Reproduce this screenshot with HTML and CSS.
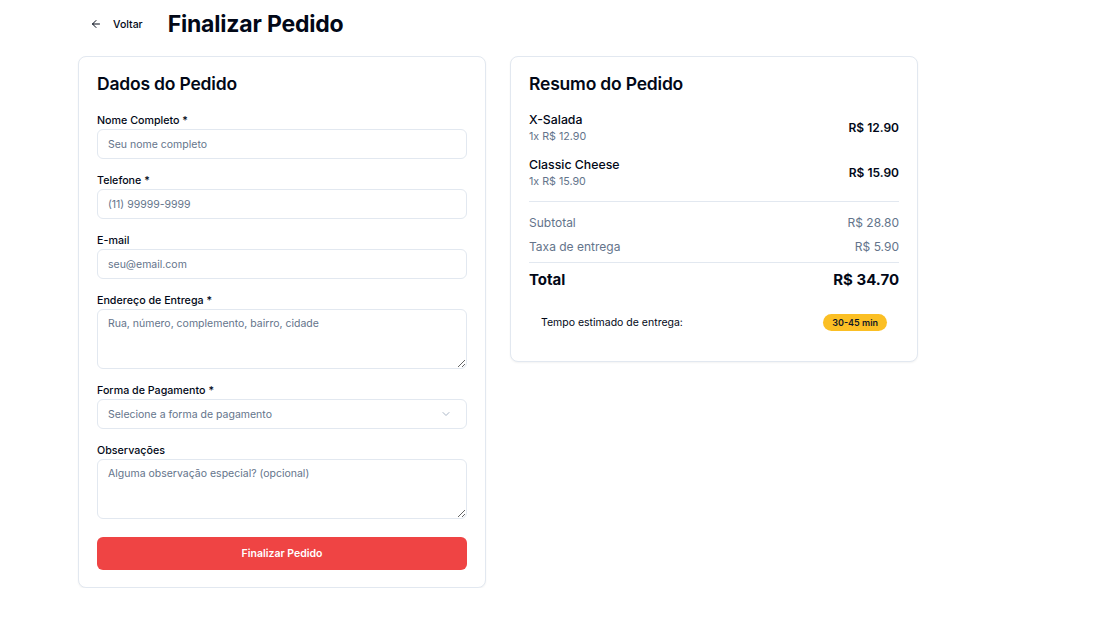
FILE: index.html
```html
<!DOCTYPE html>
<html lang="pt-BR">
<head>
<meta charset="utf-8">
<title>Finalizar Pedido</title>
<link rel="stylesheet" href="styles.css">
</head>
<body>
<div class="page">
  <header class="header">
    <button class="back" type="button">
      <svg width="12" height="12" viewBox="0 0 24 24" fill="none" stroke="currentColor" stroke-width="2" stroke-linecap="round" stroke-linejoin="round"><path d="m12 19-7-7 7-7"/><path d="M19 12H5"/></svg>
      <span>Voltar</span>
    </button>
    <h1 class="title">Finalizar Pedido</h1>
  </header>
  <main class="grid">
    <section class="card">
      <h2 class="card-title">Dados do Pedido</h2>
      <form class="form">
        <div class="field">
          <label class="label">Nome Completo *</label>
          <input class="input" type="text" placeholder="Seu nome completo">
        </div>
        <div class="field">
          <label class="label">Telefone *</label>
          <input class="input" type="text" placeholder="(11) 99999-9999">
        </div>
        <div class="field">
          <label class="label">E-mail</label>
          <input class="input" type="email" placeholder="seu@email.com">
        </div>
        <div class="field">
          <label class="label">Endereço de Entrega *</label>
          <textarea class="input textarea" placeholder="Rua, número, complemento, bairro, cidade"></textarea>
        </div>
        <div class="field">
          <label class="label">Forma de Pagamento *</label>
          <div class="input select">
            <span>Selecione a forma de pagamento</span>
            <svg width="12" height="12" viewBox="0 0 24 24" fill="none" stroke="currentColor" stroke-width="2" stroke-linecap="round" stroke-linejoin="round"><path d="m6 9 6 6 6-6"/></svg>
          </div>
        </div>
        <div class="field">
          <label class="label">Observações</label>
          <textarea class="input textarea" placeholder="Alguma observação especial? (opcional)"></textarea>
        </div>
        <button class="submit" type="button">Finalizar Pedido</button>
      </form>
    </section>
    <section class="card summary">
      <h2 class="card-title">Resumo do Pedido</h2>
      <div class="items">
        <div class="item">
          <div>
            <div class="item-name">X-Salada</div>
            <div class="item-sub">1x R$ 12.90</div>
          </div>
          <div class="item-price">R$ 12.90</div>
        </div>
        <div class="item">
          <div>
            <div class="item-name">Classic Cheese</div>
            <div class="item-sub">1x R$ 15.90</div>
          </div>
          <div class="item-price">R$ 15.90</div>
        </div>
      </div>
      <div class="totals">
        <div class="row muted"><span>Subtotal</span><span>R$ 28.80</span></div>
        <div class="row muted"><span>Taxa de entrega</span><span>R$ 5.90</span></div>
      </div>
      <div class="row total"><span>Total</span><span>R$ 34.70</span></div>
      <div class="eta">
        <span>Tempo estimado de entrega:</span>
        <span class="badge">30-45 min</span>
      </div>
    </section>
  </main>
</div>
</body>
</html>
```
FILE: styles.css
```css
* { box-sizing: border-box; }
html, body { margin: 0; padding: 0; background: #ffffff; }
body {
  font-family: Inter, "Noto Sans", sans-serif;
  color: #020817;
}
.page {
  padding: 8px 0 0 78px;
}
.header {
  display: flex;
  align-items: center;
  height: 32px;
  margin-bottom: 16px;
}
.back {
  display: flex;
  align-items: center;
  gap: 11px;
  background: none;
  border: 0;
  padding: 0 0 0 12px;
  margin-right: 25px;
  font-family: inherit;
  font-size: 10.5px;
  font-weight: 500;
  color: #020817;
  cursor: pointer;
}
.title {
  margin: 0;
  font-size: 23px;
  font-weight: 700;
  line-height: 32px;
  letter-spacing: -0.2px;
}
.grid {
  display: grid;
  grid-template-columns: 408px 408px;
  gap: 24px;
  align-items: start;
}
.card {
  border: 1px solid #e2e8f0;
  border-radius: 8px;
  padding: 15px 18px 17px;
  box-shadow: 0 1px 2px rgba(0,0,0,0.05);
  background: #fff;
}
.summary { padding-bottom: 18px; }
.card-title {
  margin: 0;
  font-size: 17.5px;
  line-height: 24px;
  font-weight: 600;
  letter-spacing: -0.2px;
}
.form {
  display: flex;
  flex-direction: column;
  gap: 14px;
  margin-top: 17px;
}
.field {
  display: flex;
  flex-direction: column;
  gap: 1px;
}
.label {
  font-size: 10.7px;
  line-height: 14px;
  padding-top: 1px;
  font-weight: 500;
}
.input {
  height: 30px;
  width: 100%;
  border: 1px solid #e2e8f0;
  border-radius: 6px;
  padding: 0 10px;
  font-family: inherit;
  font-size: 10.5px;
  color: #020817;
  background: #fff;
  outline: none;
}
.input::placeholder { color: #64748b; }
.textarea {
  height: 60px;
  padding: 7px 10px;
  line-height: 14px;
  resize: vertical;
  display: block;
}
.select {
  display: flex;
  align-items: center;
  justify-content: space-between;
  color: #64748b;
}
.select svg { color: #94a3b8; opacity: 0.8; margin-right: 4px; }
.submit {
  margin-top: 4px;
  height: 33px;
  border: 0;
  border-radius: 6px;
  background: #ef4444;
  color: #fff;
  font-family: inherit;
  font-size: 10.5px;
  font-weight: 600;
  cursor: pointer;
}
.items {
  margin-top: 15px;
  display: flex;
  flex-direction: column;
  gap: 11px;
  padding-bottom: 11px;
  border-bottom: 1px solid #e2e8f0;
}
.item {
  display: flex;
  justify-content: space-between;
  align-items: center;
}
.item-name {
  font-size: 12.3px;
  line-height: 18px;
  font-weight: 500;
}
.item-sub {
  font-size: 10.7px;
  line-height: 16px;
  color: #64748b;
}
.item-price {
  font-size: 12px;
  font-weight: 600;
  margin-bottom: 1px;
}
.totals {
  display: flex;
  flex-direction: column;
  gap: 8px;
  padding: 13px 0 7px;
  border-bottom: 1px solid #e2e8f0;
}
.row {
  display: flex;
  justify-content: space-between;
  align-items: center;
  font-size: 12px;
  line-height: 16px;
}
.muted { color: #64748b; }
.total {
  font-size: 15px;
  line-height: 24px;
  font-weight: 700;
  margin-top: 5px;
}
.eta {
  margin-top: 10px;
  display: flex;
  justify-content: space-between;
  align-items: center;
  padding: 12px;
  border-radius: 8px;
  font-size: 10.5px;
  line-height: 16px;
}
.badge {
  background: #fbbf24;
  color: #111827;
  font-size: 9px;
  font-weight: 600;
  line-height: 13px;
  padding: 2px 9px;
  border-radius: 999px;
}
```
